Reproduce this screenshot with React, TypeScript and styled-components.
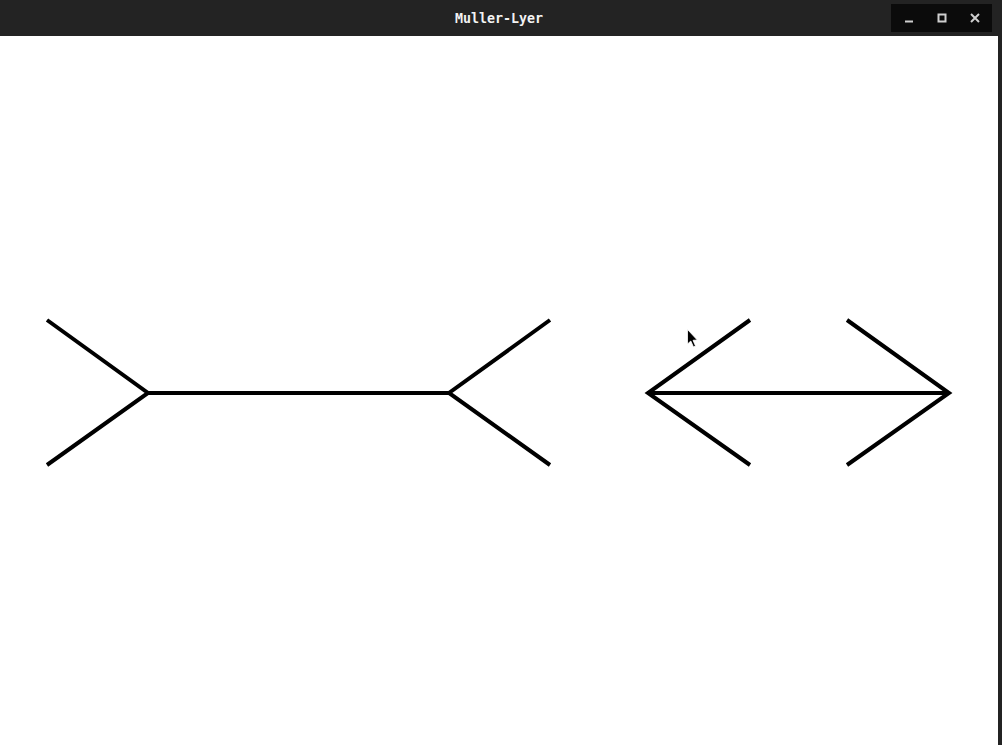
import styled, { createGlobalStyle } from 'styled-components';

const GlobalStyle = createGlobalStyle`
  html, body {
    margin: 0;
    padding: 0;
    background: #232323;
  }
`;

const Screen = styled.div`
  display: flex;
  width: 1002px;
  height: 745px;
  overflow: hidden;
`;

const Window = styled.div`
  display: flex;
  flex-direction: column;
  width: 998px;
  height: 100%;
`;

const TitleBar = styled.header`
  display: grid;
  grid-template-columns: 1fr auto 1fr;
  align-items: center;
  flex-shrink: 0;
  height: 36px;
  background: #232323;
`;

const Title = styled.span`
  grid-column: 2;
  color: #f2f2f2;
  font-family: 'DejaVu Sans Mono', 'Liberation Mono', monospace;
  font-size: 13.3px;
  font-weight: 600;
`;

const Controls = styled.div`
  grid-column: 3;
  justify-self: end;
  display: flex;
  align-items: center;
  height: 28px;
  margin-right: 6px;
  padding: 0 1px;
  background: #0b0b0b;
`;

const ControlButton = styled.button`
  display: flex;
  align-items: center;
  justify-content: center;
  width: 33px;
  height: 28px;
  padding: 0;
  border: none;
  background: transparent;
  color: #cfcfcf;
`;

const Strip = styled.div`
  flex: 1;
  background: #232323;
`;

const Canvas = styled.main`
  flex: 1;
  min-height: 0;
  background: #fff;

  svg {
    display: block;
  }
`;

const Stroke = styled.path`
  fill: none;
  stroke: #000;
  stroke-width: 4;
  stroke-linecap: butt;
  stroke-linejoin: miter;
`;

function App() {
  return (
    <>
      <GlobalStyle />
      <Screen>
        <Window>
          <TitleBar>
            <Title>Muller-Lyer</Title>
            <Controls>
              <ControlButton aria-label="minimize">
                <svg width="10" height="10" viewBox="0 0 10 10">
                  <rect x="1" y="7.5" width="8" height="2" fill="currentColor" />
                </svg>
              </ControlButton>
              <ControlButton aria-label="maximize">
                <svg width="10" height="10" viewBox="0 0 10 10">
                  <rect x="1.5" y="1.5" width="7" height="7" fill="none" stroke="currentColor" strokeWidth="2" />
                </svg>
              </ControlButton>
              <ControlButton aria-label="close">
                <svg width="10" height="10" viewBox="0 0 10 10">
                  <path d="M1 1 L9 9 M9 1 L1 9" stroke="currentColor" strokeWidth="2" />
                </svg>
              </ControlButton>
            </Controls>
          </TitleBar>
          <Canvas>
            <svg width="998" height="709" viewBox="0 0 998 709">
              {/* fins outward */}
              <Stroke d="M47 284 L148 357 L47 429" />
              <Stroke d="M148 357 L449 357" />
              <Stroke d="M550 284 L449 357 L550 429" />
              {/* fins inward */}
              <Stroke d="M750 284 L648 357 L750 429" />
              <Stroke d="M648 357 L949 357" />
              <Stroke d="M847 284 L949 357 L847 429" />
              {/* mouse pointer */}
              <path
                d="M687.5 293.5 L687.5 308 L690.8 305 L693.5 311 L695.5 310 L693 304.3 L697.3 304 Z"
                fill="#000"
                stroke="#fff"
                strokeWidth="0.8"
              />
            </svg>
          </Canvas>
        </Window>
        <Strip />
      </Screen>
    </>
  );
}

export default App;
